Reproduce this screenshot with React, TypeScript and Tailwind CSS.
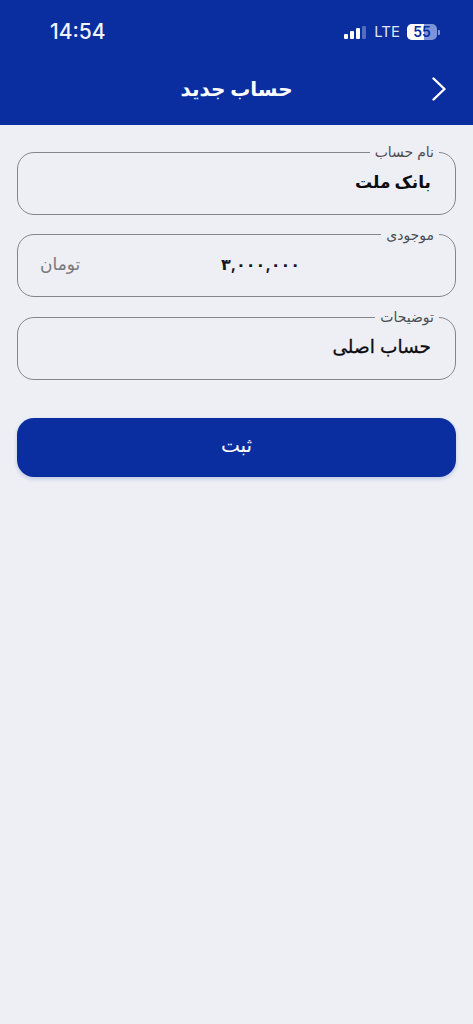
import React from 'react';

const faFont = "font-['Inter','DejaVu_Sans',sans-serif]";

const Field = ({ label, children }: { label: string; children: React.ReactNode }) => (
  <fieldset dir="rtl" className="h-[70.5px] rounded-[17px] border border-[#85858d] px-[24px] min-w-0 block">
    <legend className="mr-[-8px] px-[5px] text-[14px] leading-[16px] text-[#4c4c52] h-[16px]">{label}</legend>
    {children}
  </fieldset>
);

export default function App() {
  return (
    <div dir="ltr" className={`min-h-[1024px] bg-[#edeff4] ${faFont}`}>
      {/* Header */}
      <header className="h-[125px] bg-[#0a2e9f] text-white flex flex-col">
        <div className="flex items-center justify-between pl-[50px] pr-[33px] pt-[20px] h-[44px]">
          <span className="font-['Inter',sans-serif] text-[21px] leading-[24px] font-medium text-[#f1f3fa]">14:54</span>
          <div className="flex items-center">
            <div className="flex items-end gap-[2px] h-[13px]">
              <span className="w-[4px] h-[5px] rounded-[1px] bg-white" />
              <span className="w-[4px] h-[8px] rounded-[1px] bg-white" />
              <span className="w-[4px] h-[11px] rounded-[1px] bg-white" />
              <span className="w-[4px] h-[13px] rounded-[1px] bg-white/30" />
            </div>
            <span className="ml-[8px] font-['Inter',sans-serif] text-[15px] leading-[16px] text-[#dfe4f5]">LTE</span>
            <div className="ml-[7px] relative w-[30px] h-[16px] rounded-[5px] bg-[#7e94d6] overflow-hidden">
              <div className="absolute inset-y-0 left-0 w-[17px] bg-white" />
              <span className="absolute inset-0 flex items-center justify-center font-['Inter',sans-serif] text-[14px] leading-[16px] font-semibold text-[#0a2e9f]">55</span>
            </div>
            <span className="ml-[1px] w-[2px] h-[5px] rounded-r-[1px] bg-[#7e94d6]" />
          </div>
        </div>
        <div className="flex-1 grid grid-cols-[1fr_auto_1fr] items-center pt-[9px]">
          <span />
          <h1 dir="rtl" className="text-[20px] leading-[28px] font-bold">حساب جدید</h1>
          <svg width="14" height="24" viewBox="0 0 14 24" fill="none" className="justify-self-end mr-[27px]">
            <path d="M1.5 1.5 L12.5 12 L1.5 22.5" stroke="white" strokeWidth="2.4" strokeLinecap="round" strokeLinejoin="round" />
          </svg>
        </div>
      </header>

      {/* Form */}
      <main className="px-[17px] pt-[19px]">
        <div className="flex flex-col gap-[12px]">
          <Field label="نام حساب">
            <div className="text-[17px] leading-[26px] font-bold text-[#0c0c10] mt-[9px]">بانک ملت</div>
          </Field>
          <Field label="موجودی">
            <div className="relative mt-[8px] h-[26px] flex items-center justify-between">
              <span className="flex-1 text-center text-[16px] leading-[26px] font-bold text-[#17171b] pl-[48px]">۳,۰۰۰,۰۰۰</span>
              <span className="absolute left-[-2px] text-[17px] leading-[24px] text-[#77777d]">تومان</span>
            </div>
          </Field>
          <Field label="توضیحات">
            <div className="text-[18.5px] leading-[26px] [-webkit-text-stroke:0.3px_#0c0c10] text-[#0c0c10] mt-[8px]">حساب اصلی</div>
          </Field>
        </div>
        <button className="mt-[38px] w-full h-[59px] rounded-[17px] bg-[#0a2e9f] text-white text-[20px] pb-[5px] shadow-[0_2px_4px_rgba(10,46,159,0.2)]">
          ثبت
        </button>
      </main>
    </div>
  );
}
